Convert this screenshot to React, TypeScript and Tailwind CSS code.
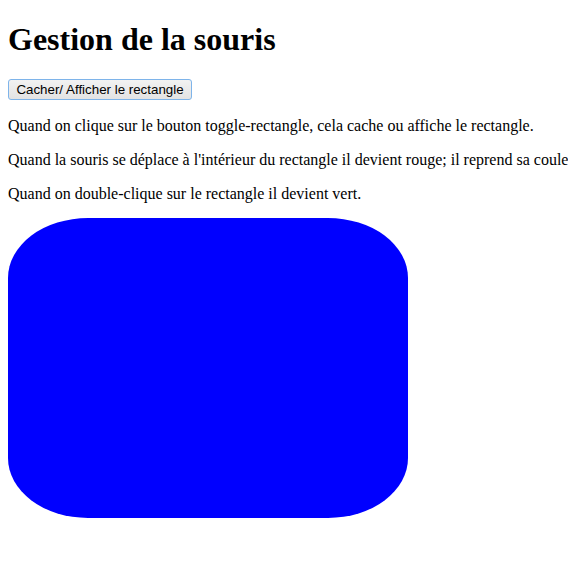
import React from "react";

export default function App() {
  return (
    <div className="h-screen w-full overflow-hidden bg-white px-2 pt-[21px] text-black font-['Liberation_Serif',serif]">
      <h1 className="m-0 text-[32px] font-bold leading-[37px]">Gestion de la souris</h1>

      <button className="mt-[21px] h-[21px] w-[184px] px-[6px] border border-[#7eb4ea] rounded-[3px] bg-gradient-to-b from-[#f2f2f2] to-[#e3e3e3] text-[13.33px] leading-[17px] font-['Liberation_Sans',sans-serif] text-black">
        Cacher/ Afficher le rectangle
      </button>

      {/* Paragraphs */}
      <p className="mt-4 text-[16px] leading-[18px]">
        Quand on clique sur le bouton toggle-rectangle, cela cache ou affiche le rectangle.
      </p>
      <p className="mt-4 whitespace-nowrap text-[16px] leading-[18px]">
        Quand la souris se déplace à l'intérieur du rectangle il devient rouge; il reprend sa couleur initiale quand elle en sort.
      </p>
      <p className="mt-4 text-[16px] leading-[18px]">
        Quand on double-clique sur le rectangle il devient vert.
      </p>

      <div className="mt-[15px] h-[300px] w-[400px] rounded-[20%] bg-[#0000ff]" />
    </div>
  );
}
